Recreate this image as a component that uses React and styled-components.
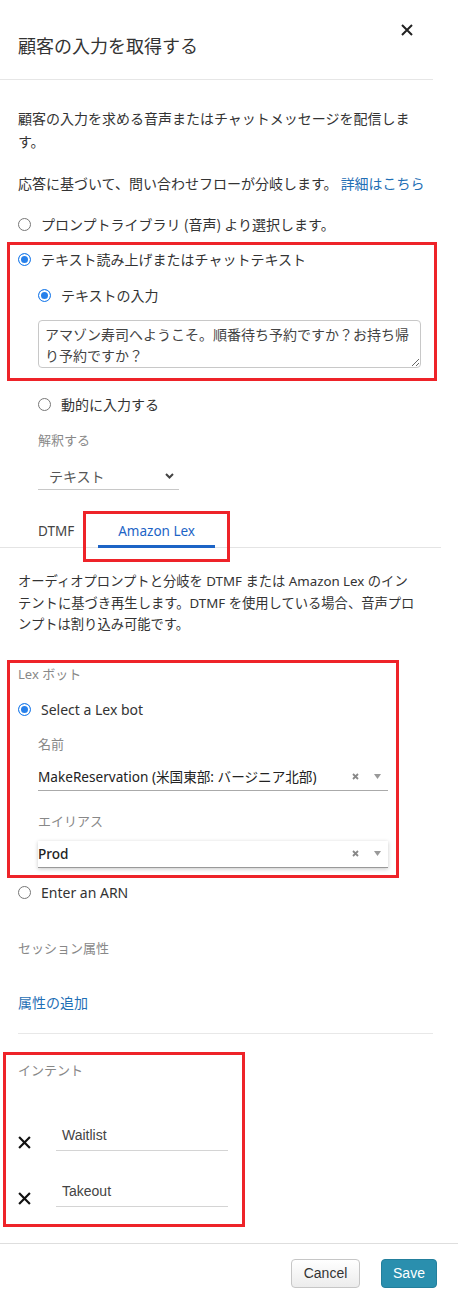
import React from 'react';
import styled, { createGlobalStyle } from 'styled-components';

const JP = `"Noto Sans CJK JP", sans-serif`;
const EMBER = `"Noto Sans", "Noto Sans CJK JP", sans-serif`;
const HELV = `"Liberation Sans", Arial, sans-serif`;

const GlobalStyle = createGlobalStyle`
  html, body { margin: 0; padding: 0; background: #fff; }
  * { box-sizing: border-box; }
`;

const Page = styled.div`
  width: 458px;
  min-height: 1302px;
  font-family: ${JP};
  color: #333;
  background: #fff;
`;

const Header = styled.div`
  display: flex;
  justify-content: space-between;
  align-items: flex-start;
  width: 433px;
  height: 80px;
  padding: 0 20px 0 18px;
  border-bottom: 1px solid #e6e6e6;
`;

const Title = styled.h1`
  margin: 33px 0 0;
  font-size: 18px;
  line-height: 24px;
  font-weight: 400;
  color: #333;
`;

const CloseBtn = styled.button`
  margin-top: 24px;
  width: 12px;
  height: 12px;
  padding: 0;
  border: 0;
  background: none;
  display: flex;
`;

const Body = styled.div`
  padding-left: 18px;
`;

const Para = styled.p`
  margin: ${({ $mt }) => $mt || 0}px 0 0;
  font-family: ${({ $latin }) => ($latin ? EMBER : JP)};
  font-size: ${({ $fs }) => $fs || 14}px;
  line-height: ${({ $lh }) => $lh || 23}px;
  max-width: ${({ $w }) => $w || 415}px;
  white-space: ${({ $nowrap }) => ($nowrap ? 'nowrap' : 'normal')};
  color: #333;
`;

const Link = styled.a`
  color: #1f6fb5;
  text-decoration: none;
`;

const RadioRow = styled.label`
  display: flex;
  align-items: center;
  gap: 10px;
  height: 20px;
  margin-top: ${({ $mt }) => $mt || 0}px;
  margin-left: ${({ $ml }) => $ml || 0}px;
  font-family: ${({ $latin }) => ($latin ? EMBER : JP)};
  font-size: 14px;
  color: #333;
`;

const Radio = styled.span`
  flex: none;
  width: 13px;
  height: 13px;
  border-radius: 50%;
  border: 1px solid #777;
  background: #fff;
  ${({ $on }) =>
    $on &&
    `
    border: 1.5px solid #2680eb;
    background: #2680eb;
    box-shadow: inset 0 0 0 2px #fff;
  `}
`;

const Highlight = styled.div`
  border: 3px solid #ee2329;
  margin-top: ${({ $mt }) => $mt || 0}px;
  margin-left: ${({ $ml }) => $ml || 0}px;
  width: ${({ $w }) => $w}px;
  padding: ${({ $pad }) => $pad};
`;

const TextArea = styled.textarea`
  display: block;
  width: 383px;
  height: 48px;
  margin: 15px 0 0 20px;
  padding: 3px 6px;
  border: 1px solid #c8c8c8;
  border-radius: 4px;
  font-family: ${JP};
  font-size: 14px;
  line-height: 21px;
  color: #444;
  overflow: hidden;
  resize: both;
  outline: none;
`;

const FieldLabel = styled.div`
  margin-top: ${({ $mt }) => $mt || 0}px;
  margin-left: ${({ $ml }) => $ml || 0}px;
  font-family: ${EMBER};
  font-size: 13px;
  line-height: 18px;
  color: #888;
`;

const PlainSelect = styled.div`
  display: flex;
  align-items: center;
  justify-content: space-between;
  width: 141px;
  height: 27px;
  margin: 14px 0 0 20px;
  padding: 0 5px 0 11px;
  border-bottom: 1px solid #c8c8c8;
  font-size: 14px;
  line-height: 26px;
  color: #555;
`;

const TabBar = styled.div`
  display: flex;
  align-items: flex-start;
  gap: 4px;
  width: 441px;
  height: 33px;
  margin: 25px 0 0 -18px;
  padding-left: 18px;
  border-bottom: 1px solid #e4e4e4;
`;

const Tab = styled.div`
  position: relative;
  height: 33px;
  padding: 6px 20px 0;
  border-bottom: 3px solid ${({ $active }) => ($active ? '#1d64c6' : 'transparent')};
  font-family: ${EMBER};
  font-size: 13.5px;
  line-height: 20px;
  color: ${({ $active }) => ($active ? '#1d64c6' : '#444')};
`;

const TabMark = styled.span`
  position: absolute;
  left: -15px;
  right: -15px;
  top: -4px;
  bottom: -17px;
  border: 3px solid #ee2329;
  pointer-events: none;
`;

const LexSelect = styled.div`
  display: flex;
  align-items: center;
  justify-content: space-between;
  width: 350px;
  height: 27px;
  margin: 11px 0 0 20px;
  padding-right: 7px;
  border-bottom: 1px solid ${({ $boxed }) => ($boxed ? '#999' : '#aaa')};
  box-shadow: ${({ $boxed }) => ($boxed ? '0 1px 4px rgba(0,0,0,0.22)' : 'none')};
  font-family: ${EMBER};
  font-size: 13.6px;
  font-weight: ${({ $boxed }) => ($boxed ? 500 : 400)};
  line-height: 26px;
  color: #222;
`;

const SelectIcons = styled.span`
  display: flex;
  align-items: center;
  gap: 15px;
`;

const AddLink = styled.a`
  display: block;
  margin-top: 35px;
  font-size: 14px;
  line-height: 20px;
  color: #1f6fb5;
  text-decoration: none;
`;

const Divider = styled.div`
  width: 415px;
  height: 1px;
  margin-top: 21px;
  background: #e8e8e8;
`;

const IntentRow = styled.div`
  display: flex;
  align-items: flex-end;
  gap: 25px;
  margin-top: ${({ $mt }) => $mt}px;
`;

const RemoveBtn = styled.span`
  display: flex;
  margin-bottom: 2px;
`;

const IntentInput = styled.div`
  width: 172px;
  height: 31px;
  padding-left: 6px;
  border-bottom: 1px solid #d4d4d4;
  font-family: ${HELV};
  font-size: 14px;
  line-height: 30px;
  color: #444;
`;

const Footer = styled.div`
  display: flex;
  justify-content: flex-end;
  gap: 21px;
  width: 458px;
  margin-top: 16px;
  padding: 15px 21px 0 0;
  border-top: 1px solid #dedede;
`;

const Button = styled.button`
  height: 29px;
  width: ${({ $w }) => $w}px;
  border-radius: 4px;
  font-family: ${HELV};
  font-size: 14px;
  color: ${({ $primary }) => ($primary ? '#fff' : '#333')};
  background: ${({ $primary }) =>
    $primary ? '#2a8fae' : 'linear-gradient(#ffffff, #ececec)'};
  border: 1px solid ${({ $primary }) => ($primary ? '#237f9c' : '#c6c6c6')};
`;

const XMark = ({ size = 12, stroke = '#222', width = 2 }) => (
  <svg width={size} height={size} viewBox="0 0 12 12">
    <path d="M1 1L11 11M11 1L1 11" stroke={stroke} strokeWidth={width} />
  </svg>
);

const Chevron = () => (
  <svg width="9" height="6" viewBox="0 0 9 6">
    <path d="M1 1L4.5 4.5L8 1" fill="none" stroke="#444" strokeWidth="2" />
  </svg>
);

const ClearIcon = () => (
  <svg width="7" height="7" viewBox="0 0 7 7">
    <path d="M1 1L6 6M6 1L1 6" stroke="#888" strokeWidth="1.8" />
  </svg>
);

const Caret = () => (
  <svg width="7" height="5" viewBox="0 0 7 5">
    <path d="M0 0H7L3.5 5Z" fill="#999" />
  </svg>
);

export default function App() {
  return (
    <Page>
      <GlobalStyle />
      <Header>
        <Title>顧客の入力を取得する</Title>
        <CloseBtn>
          <XMark />
        </CloseBtn>
      </Header>

      <Body>
        <Para $mt={27} $w={400}>
          顧客の入力を求める音声またはチャットメッセージを配信します。
        </Para>
        <Para $mt={19} $nowrap>
          応答に基づいて、問い合わせフローが分岐します。 <Link>詳細はこちら</Link>
        </Para>

        <RadioRow $mt={19}>
          <Radio />
          プロンプトライブラリ (音声) より選択します。
        </RadioRow>

        <Highlight $mt={8} $ml={-11} $w={430} $pad="4px 0 10px 8px">
          <RadioRow>
            <Radio $on />
            テキスト読み上げまたはチャットテキスト
          </RadioRow>
          <RadioRow $mt={16} $ml={20}>
            <Radio $on />
            テキストの入力
          </RadioRow>
          <TextArea
            readOnly
            value="アマゾン寿司へようこそ。順番待ち予約ですか？お持ち帰り予約ですか？"
          />
        </Highlight>

        <RadioRow $mt={13} $ml={20}>
          <Radio />
          動的に入力する
        </RadioRow>
        <FieldLabel $mt={17} $ml={20}>解釈する</FieldLabel>
        <PlainSelect>
          テキスト
          <Chevron />
        </PlainSelect>

        <TabBar>
          <Tab>DTMF</Tab>
          <Tab $active>
            Amazon Lex
            <TabMark />
          </Tab>
        </TabBar>

        <Para $mt={23} $lh={21.5} $fs={13.3} $latin $nowrap>
          オーディオプロンプトと分岐を DTMF または Amazon Lex のイン
          <br />
          テントに基づき再生します。DTMF を使用している場合、音声プロ
          <br />
          ンプトは割り込み可能です。
        </Para>

        <Highlight $mt={24} $ml={-11} $w={392} $pad="2px 0 7px 8px">
          <FieldLabel>Lex ボット</FieldLabel>
          <RadioRow $mt={17} $latin>
            <Radio $on />
            Select a Lex bot
          </RadioRow>
          <FieldLabel $mt={15} $ml={20}>名前</FieldLabel>
          <LexSelect>
            MakeReservation (米国東部: バージニア北部)
            <SelectIcons>
              <ClearIcon />
              <Caret />
            </SelectIcons>
          </LexSelect>
          <FieldLabel $mt={21} $ml={20}>エイリアス</FieldLabel>
          <LexSelect $boxed>
            Prod
            <SelectIcons>
              <ClearIcon />
              <Caret />
            </SelectIcons>
          </LexSelect>
        </Highlight>

        <RadioRow $mt={5} $latin>
          <Radio />
          Enter an ARN
        </RadioRow>

        <FieldLabel $mt={36}>セッション属性</FieldLabel>
        <AddLink>属性の追加</AddLink>
        <Divider />

        <Highlight $mt={18} $ml={-15} $w={242} $pad="6px 0 17px 12px">
          <FieldLabel>インテント</FieldLabel>
          <IntentRow $mt={41}>
            <RemoveBtn>
              <XMark size={13} stroke="#111" />
            </RemoveBtn>
            <IntentInput>Waitlist</IntentInput>
          </IntentRow>
          <IntentRow $mt={25}>
            <RemoveBtn>
              <XMark size={13} stroke="#111" />
            </RemoveBtn>
            <IntentInput>Takeout</IntentInput>
          </IntentRow>
        </Highlight>
      </Body>

      <Footer>
        <Button $w={69}>Cancel</Button>
        <Button $w={56} $primary>Save</Button>
      </Footer>
    </Page>
  );
}
